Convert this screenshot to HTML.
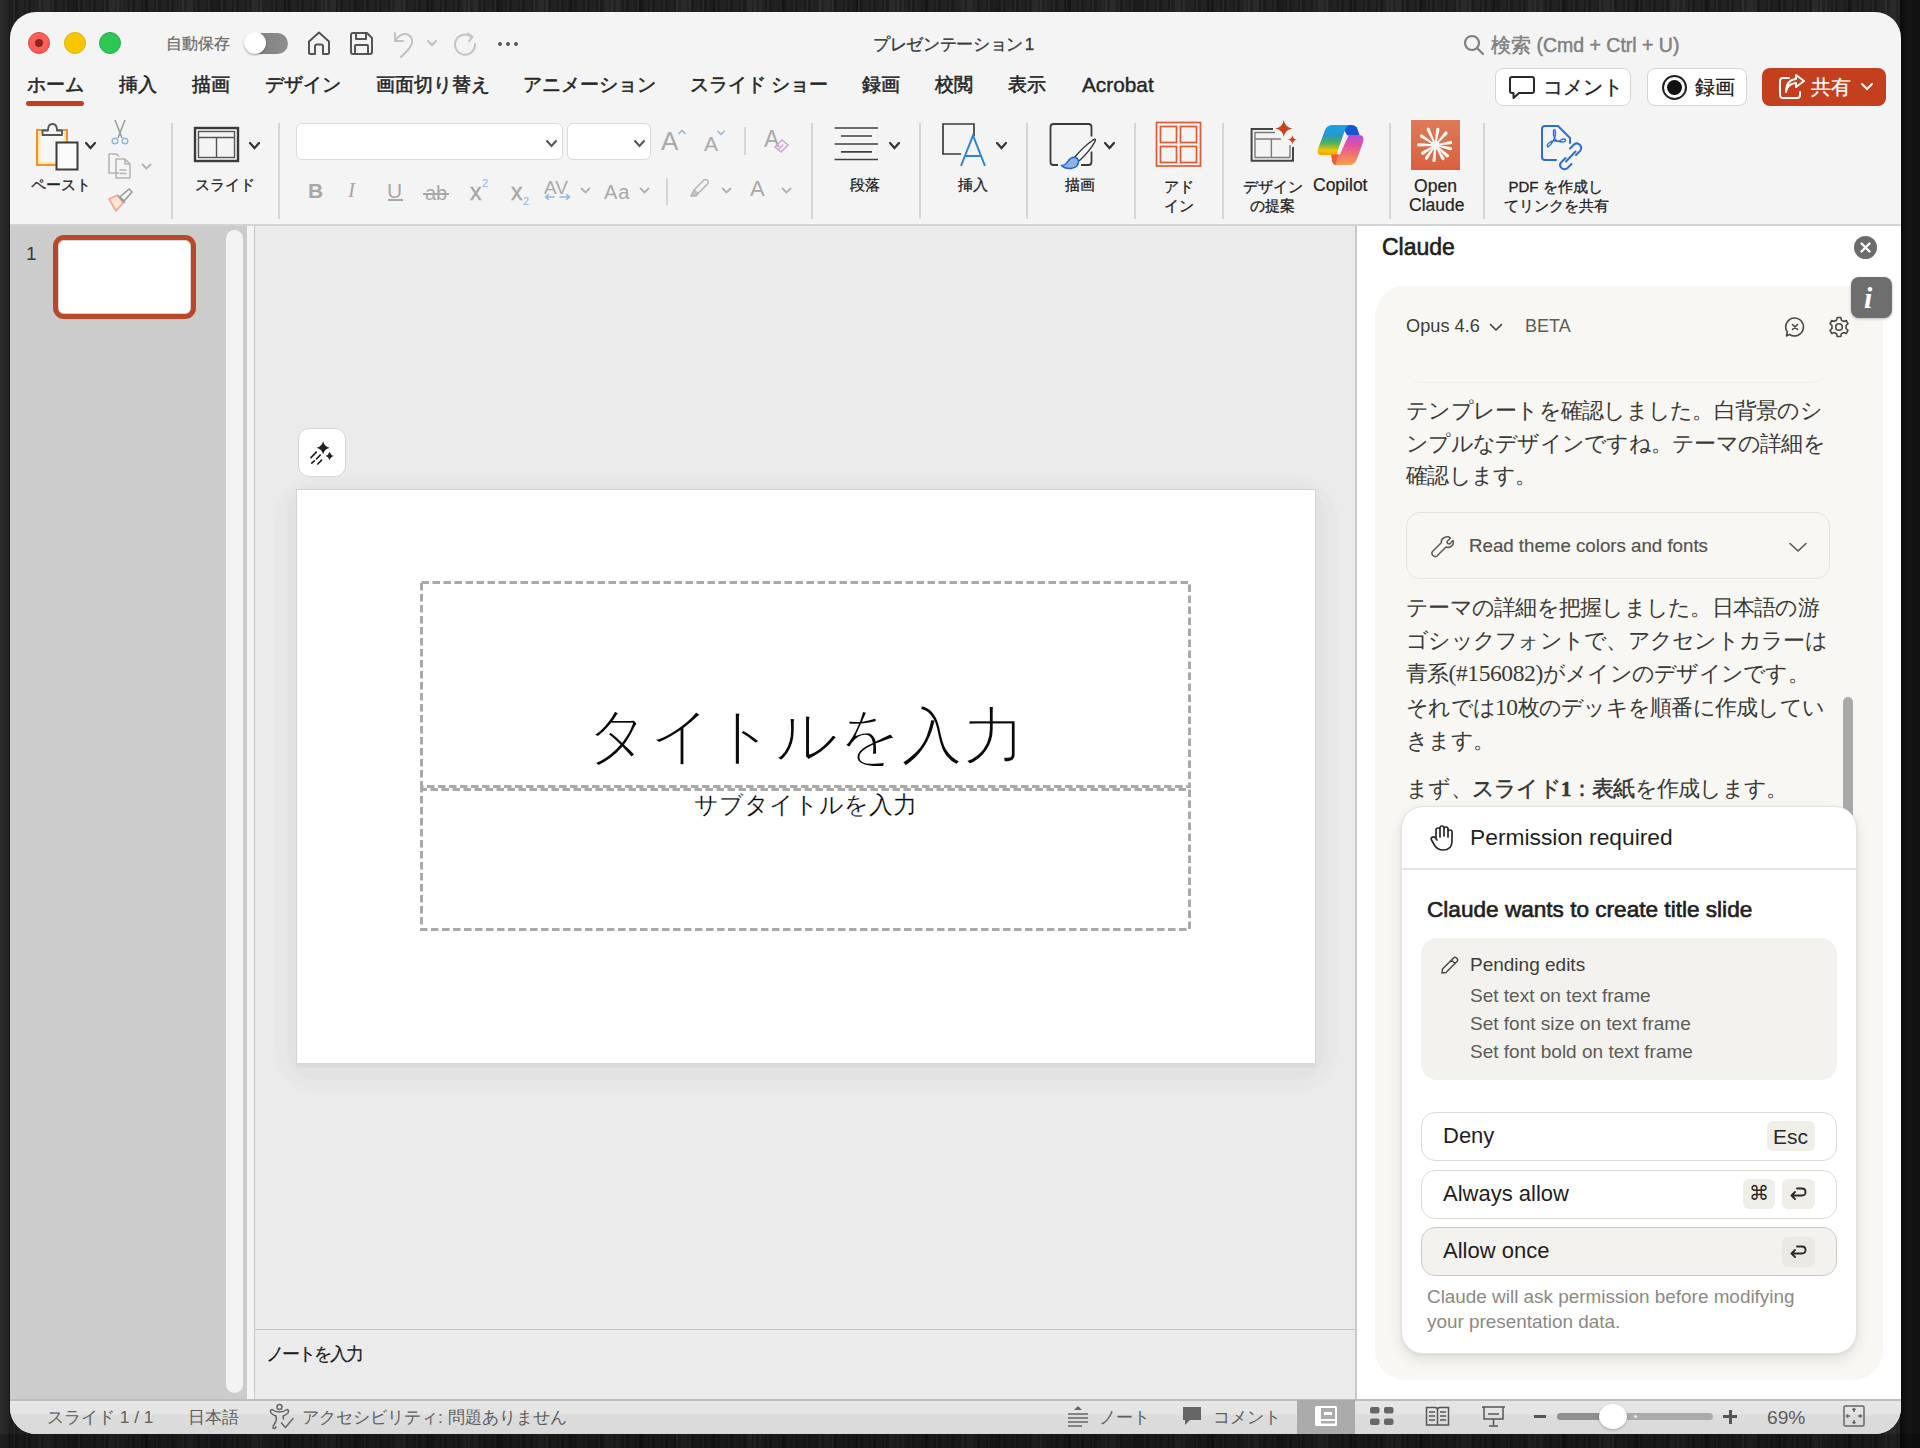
<!DOCTYPE html>
<html><head><meta charset="utf-8">
<style>
*{box-sizing:border-box;margin:0;padding:0}
html,body{width:1920px;height:1448px;overflow:hidden}
body{font-family:"Liberation Sans",sans-serif;position:relative;
background:#1e1e1e;
background-image:repeating-linear-gradient(90deg,rgba(255,255,255,0.035) 0 2px,rgba(0,0,0,0.1) 2px 5px,rgba(255,255,255,0.02) 5px 11px,rgba(0,0,0,0.07) 11px 13px),repeating-linear-gradient(90deg,rgba(0,0,0,0.22) 0 6px,rgba(0,0,0,0) 6px 37px,rgba(255,255,255,0.035) 37px 52px,rgba(0,0,0,0) 52px 71px);}
.abs{position:absolute}
#win{position:absolute;left:10px;top:12px;width:1891px;height:1422px;border-radius:26px;overflow:hidden;background:#f4f4f4}
.t{position:absolute;white-space:nowrap;line-height:1}
.tab{font-size:19px;color:#262626;-webkit-text-stroke:0.55px #262626}
.jp{font-size:21.6px;letter-spacing:-0.75px;line-height:32.7px;color:#3a3a37;white-space:nowrap}
.st{font-size:17.3px;color:#5e5e5e}
.sep{position:absolute;width:2px;background:#d6d6d6}
</style></head>
<body>
<div class="abs" style="left:0;top:0;width:10px;height:1448px;background:linear-gradient(90deg,#2c2c2c,#262626 80%,#161616)"></div>
<div class="abs" style="left:1900px;top:0;width:20px;height:1448px;background:linear-gradient(90deg,#0c0c0c,#141414 40%,#121212)"></div>
<div class="abs" style="left:0;top:1434px;width:1920px;height:14px;background:rgba(0,0,0,0.25)"></div>
<div id="win">
  <!-- content uses page coordinates via wrapper offset -->
  <div class="abs" style="left:-10px;top:-12px;width:1920px;height:1448px">
    <!-- ============ TITLE BAR ============ -->
    
    <!-- traffic lights -->
    <div class="abs" style="left:28px;top:32px;width:22px;height:22px;border-radius:50%;background:#fe5f57;border:0.5px solid #e14640"></div>
    <div class="abs" style="left:35px;top:39px;width:8px;height:8px;border-radius:50%;background:#8d2622"></div>
    <div class="abs" style="left:64px;top:32px;width:22px;height:22px;border-radius:50%;background:#f7c600;border:0.5px solid #e0b000"></div>
    <div class="abs" style="left:99px;top:32px;width:22px;height:22px;border-radius:50%;background:#2fc655;border:0.5px solid #22b245"></div>
    <div class="t" style="left:166px;top:36px;font-size:16px;color:#6e6e6e;-webkit-text-stroke:0.3px #6e6e6e">自動保存</div>
    <!-- toggle -->
    <div class="abs" style="left:245px;top:33px;width:43px;height:21px;border-radius:11px;background:linear-gradient(90deg,#7a7a7a,#8e8e8e)"></div>
    <div class="abs" style="left:244px;top:32px;width:22px;height:22px;border-radius:50%;background:#fff;box-shadow:0 1px 2px rgba(0,0,0,.35)"></div>
    <svg class="abs" style="left:306px;top:30px" width="26" height="26" viewBox="0 0 26 26" fill="none" stroke="#555" stroke-width="2" stroke-linejoin="round"><path d="M3 11.5 L13 2.5 L23 11.5 V22.5 Q23 24 21.5 24 H17 V16.5 Q17 14.5 15 14.5 H11 Q9 14.5 9 16.5 V24 H4.5 Q3 24 3 22.5 Z"/></svg>
    <svg class="abs" style="left:349px;top:31px" width="25" height="25" viewBox="0 0 25 25" fill="none" stroke="#555" stroke-width="2" stroke-linejoin="round"><path d="M2 4 Q2 2 4 2 H18 L23 7 V21 Q23 23 21 23 H4 Q2 23 2 21 Z"/><path d="M7 2 V8 H17 V2"/><path d="M6 23 V15 Q6 14 7 14 H18 Q19 14 19 15 V23"/></svg>
    <svg class="abs" style="left:391px;top:30px" width="26" height="28" viewBox="0 0 26 28" fill="none" stroke="#c2c2c2" stroke-width="2" stroke-linecap="round" stroke-linejoin="round"><path d="M4 3 V11 H12"/><path d="M4 11 Q9 3 15 4 Q22 6 21 13 Q20 18 10 27"/></svg>
    <svg class="abs" style="left:426px;top:39px" width="12" height="9" viewBox="0 0 12 9" fill="none" stroke="#bdbdbd" stroke-width="2" stroke-linecap="round"><path d="M2 2 L6 6 L10 2"/></svg>
    <svg class="abs" style="left:452px;top:31px" width="26" height="26" viewBox="0 0 26 26" fill="none" stroke="#c4c4c4" stroke-width="2" stroke-linecap="round" stroke-linejoin="round"><path d="M19.5 6 A10 10 0 1 0 23 13"/><path d="M16 2.5 L20.5 6 L17 10"/></svg>
    <div class="abs" style="left:498px;top:41.5px;width:4.4px;height:4.4px;border-radius:50%;background:#555"></div>
    <div class="abs" style="left:505.8px;top:41.5px;width:4.4px;height:4.4px;border-radius:50%;background:#555"></div>
    <div class="abs" style="left:513.6px;top:41.5px;width:4.4px;height:4.4px;border-radius:50%;background:#555"></div>
    <div class="t" style="left:873px;top:36px;font-size:17.2px;letter-spacing:-0.35px;color:#3a3a3a;-webkit-text-stroke:0.35px #3a3a3a">プレゼンテーション<span style="font-size:17px;margin-left:2px">1</span></div>
    <!-- search -->
    <svg class="abs" style="left:1463px;top:34px" width="22" height="22" viewBox="0 0 22 22" fill="none" stroke="#808080" stroke-width="2.2" stroke-linecap="round"><circle cx="9" cy="9" r="7"/><path d="M14 14 L20 20"/></svg>
    <div class="t" style="left:1491px;top:36px;font-size:19.5px;color:#808080;-webkit-text-stroke:0.45px #808080">検索 (Cmd + Ctrl + U)</div>
    <!-- tabs -->
    <div class="t tab" style="left:27px;top:75px">ホーム</div>
    <div class="abs" style="left:26px;top:101px;width:58px;height:5px;border-radius:3px;background:#c2401f"></div>
    <div class="t tab" style="left:119px;top:75px">挿入</div>
    <div class="t tab" style="left:192px;top:75px">描画</div>
    <div class="t tab" style="left:265px;top:75px">デザイン</div>
    <div class="t tab" style="left:376px;top:75px">画面切り替え</div>
    <div class="t tab" style="left:523px;top:75px">アニメーション</div>
    <div class="t tab" style="left:690px;top:75px">スライド ショー</div>
    <div class="t tab" style="left:862px;top:75px">録画</div>
    <div class="t tab" style="left:935px;top:75px">校閲</div>
    <div class="t tab" style="left:1008px;top:75px">表示</div>
    <div class="t tab" style="left:1082px;top:75px;font-size:20.8px;-webkit-text-stroke:0.4px #262626">Acrobat</div>
    <!-- right buttons -->
    <div class="abs" style="left:1495px;top:68px;width:136px;height:38px;border-radius:8px;background:#fff;border:1px solid #d5d5d5"></div>
    <svg class="abs" style="left:1508px;top:75px" width="28" height="26" viewBox="0 0 28 26" fill="none" stroke="#2a2a2a" stroke-width="2" stroke-linejoin="round"><path d="M4 2 H24 Q26 2 26 4 V16 Q26 18 24 18 H11 L5.5 23 V18 H4 Q2 18 2 16 V4 Q2 2 4 2 Z"/></svg>
    <div class="t" style="left:1543px;top:77px;font-size:20px;color:#222;-webkit-text-stroke:0.3px #222">コメント</div>
    <div class="abs" style="left:1647px;top:68px;width:100px;height:38px;border-radius:8px;background:#fff;border:1px solid #d5d5d5"></div>
    <div class="abs" style="left:1662px;top:75px;width:25px;height:25px;border-radius:50%;border:2px solid #222"></div>
    <div class="abs" style="left:1667px;top:80px;width:15px;height:15px;border-radius:50%;background:#111"></div>
    <div class="t" style="left:1695px;top:77px;font-size:20px;color:#222;-webkit-text-stroke:0.3px #222">録画</div>
    <div class="abs" style="left:1762px;top:68px;width:124px;height:38px;border-radius:8px;background:#c43f1d"></div>
    <svg class="abs" style="left:1777px;top:73px" width="30" height="28" viewBox="0 0 30 28" fill="none" stroke="#fff" stroke-width="2" stroke-linejoin="round" stroke-linecap="round"><path d="M12 5 H6 Q3 5 3 8 V22 Q3 25 6 25 H20 Q23 25 23 22 V19"/><path d="M9 19 Q10 11 19 10 V14 L27 8 L19 2 V6 Q9 7 9 19 Z"/></svg>
    <div class="t" style="left:1811px;top:77px;font-size:20px;color:#fff;-webkit-text-stroke:0.3px #fff">共有</div>
    <svg class="abs" style="left:1860px;top:82px" width="14" height="10" viewBox="0 0 14 10" fill="none" stroke="#fff" stroke-width="2" stroke-linecap="round"><path d="M2 2 L7 7 L12 2"/></svg>

    <!-- ============ RIBBON ============ -->
    
    <!-- separators -->
    <div class="sep" style="left:171px;top:123px;height:96px"></div>
    <div class="sep" style="left:278px;top:123px;height:96px"></div>
    <div class="sep" style="left:811px;top:123px;height:96px"></div>
    <div class="sep" style="left:919px;top:123px;height:96px"></div>
    <div class="sep" style="left:1026px;top:123px;height:96px"></div>
    <div class="sep" style="left:1134px;top:123px;height:96px"></div>
    <div class="sep" style="left:1222px;top:123px;height:96px"></div>
    <div class="sep" style="left:1389px;top:123px;height:96px"></div>
    <div class="sep" style="left:1483px;top:123px;height:96px"></div>
    <!-- paste -->
    <svg class="abs" style="left:34px;top:121px" width="50" height="52" viewBox="0 0 50 52">
      <rect x="3" y="9" width="30" height="35" fill="#fbe7a8" stroke="#f0902f" stroke-width="2"/>
      <rect x="6.5" y="12" width="23" height="29" fill="#f6f6f6" stroke="none"/>
      <path d="M8.5 14 V9.5 H14 Q14 3 18.5 3 Q23 3 23 9.5 H28 V14 Z" fill="#f4f4f4" stroke="#555" stroke-width="1.8" stroke-linejoin="round"/>
      <rect x="22.5" y="21.5" width="21" height="27" fill="#fafafa" stroke="#3c3c3c" stroke-width="2"/>
    </svg>
    <svg class="abs" style="left:84px;top:141px" width="13" height="10" viewBox="0 0 13 10" fill="none" stroke="#333" stroke-width="2.2" stroke-linecap="round"><path d="M2 2 L6.5 7 L11 2"/></svg>
    <div class="t" style="left:31px;top:177px;font-size:15px;color:#222;-webkit-text-stroke:0.3px #222">ペースト</div>
    <svg class="abs" style="left:110px;top:119px" width="20" height="27" viewBox="0 0 20 27" fill="none" stroke-width="1.5">
      <path d="M5 1 L12 19 M15 1 L8 19" stroke="#9a9a9a"/>
      <circle cx="5" cy="22" r="2.8" stroke="#8fb8e6"/><circle cx="15" cy="22" r="2.8" stroke="#8fb8e6"/>
    </svg>
    <svg class="abs" style="left:106px;top:152px" width="28" height="28" viewBox="0 0 28 28" fill="none" stroke="#b4b4b4" stroke-width="1.6" stroke-linejoin="round">
      <path d="M13 21 H3 V2 H10.5 L13 4.5"/><path d="M10 7 H19 L24 12 V26 H10 Z"/><path d="M19 7 V12 H24"/><path d="M13.5 18 H20.5 M13.5 21.5 H20.5"/>
    </svg>
    <svg class="abs" style="left:141px;top:163px" width="11" height="8" viewBox="0 0 11 8" fill="none" stroke="#b0b0b0" stroke-width="1.8" stroke-linecap="round"><path d="M1.5 1.5 L5.5 5.5 L9.5 1.5"/></svg>
    <svg class="abs" style="left:106px;top:187px" width="28" height="26" viewBox="0 0 28 26" fill="none" stroke-width="1.6" stroke-linejoin="round">
      <path d="M3 12 L12 8 L17 16 L10 24 Z" fill="#fbe3d6" stroke="#f0a88e"/>
      <path d="M14 10 L23 2 L26 5 L18 14 Z" stroke="#9a9a9a"/><path d="M12 9 L19 16" stroke="#9a9a9a"/>
    </svg>
    <!-- slide layout -->
    <svg class="abs" style="left:193px;top:126px" width="47" height="38" viewBox="0 0 47 38" fill="none" stroke="#3a3a3a">
      <rect x="2" y="2" width="43" height="33" stroke-width="2.4"/>
      <rect x="5.5" y="5.5" width="36" height="26" stroke-width="1.4" stroke="#555"/>
      <path d="M5.5 11.5 H41.5 M23.5 11.5 V31.5" stroke-width="1.4" stroke="#555"/>
    </svg>
    <svg class="abs" style="left:248px;top:141px" width="13" height="10" viewBox="0 0 13 10" fill="none" stroke="#333" stroke-width="2.2" stroke-linecap="round"><path d="M2 2 L6.5 7 L11 2"/></svg>
    <div class="t" style="left:195px;top:177px;font-size:15px;color:#222;-webkit-text-stroke:0.3px #222">スライド</div>
    <!-- font boxes -->
    <div class="abs" style="left:296px;top:123px;width:267px;height:37px;border-radius:6px;background:#fff;border:1px solid #dadada"></div>
    <svg class="abs" style="left:545px;top:138.5px" width="13" height="10" viewBox="0 0 13 10" fill="none" stroke="#555" stroke-width="2" stroke-linecap="round"><path d="M2 2 L6.5 7 L11 2"/></svg>
    <div class="abs" style="left:567px;top:123px;width:84px;height:37px;border-radius:6px;background:#fff;border:1px solid #dadada"></div>
    <svg class="abs" style="left:633px;top:138.5px" width="13" height="10" viewBox="0 0 13 10" fill="none" stroke="#555" stroke-width="2" stroke-linecap="round"><path d="M2 2 L6.5 7 L11 2"/></svg>
    <div class="t" style="left:661px;top:128px;font-size:26px;color:#a9a9a9">A</div>
    <svg class="abs" style="left:677px;top:128px" width="10" height="8" viewBox="0 0 10 8" fill="none" stroke="#8db6e3" stroke-width="1.5"><path d="M1.5 6 L5 2.5 L8.5 6"/></svg>
    <div class="t" style="left:704px;top:133px;font-size:21px;color:#a9a9a9">A</div>
    <svg class="abs" style="left:716px;top:129px" width="10" height="8" viewBox="0 0 10 8" fill="none" stroke="#8db6e3" stroke-width="1.5"><path d="M1.5 2 L5 5.5 L8.5 2"/></svg>
    <div class="sep" style="left:744px;top:127px;height:28px;width:1.5px"></div>
    <div class="t" style="left:764px;top:128px;font-size:23px;color:#a9a9a9">A</div>
    <svg class="abs" style="left:772px;top:138px" width="18" height="16" viewBox="0 0 18 16" fill="none" stroke="#d7a3dd" stroke-width="1.6"><path d="M3 9 L10 2 L16 7 L9 14 Z M6 12 L11 6.5"/></svg>
    <!-- row 2 -->
    <div class="t" style="left:308px;top:180px;font-size:21px;font-weight:bold;color:#a7a7a7">B</div>
    <div class="t" style="left:348px;top:180px;font-size:21px;font-style:italic;font-family:'Liberation Serif',serif;color:#a7a7a7">I</div>
    <div class="t" style="left:387px;top:180px;font-size:21px;color:#a7a7a7">U</div>
    <div class="abs" style="left:388px;top:199px;width:15px;height:1.6px;background:#a7a7a7"></div>
    <div class="t" style="left:425px;top:183px;font-size:20px;color:#a7a7a7">ab</div>
    <div class="abs" style="left:423px;top:193px;width:26px;height:1.6px;background:#a7a7a7"></div>
    <div class="t" style="left:470px;top:181px;font-size:23px;color:#a7a7a7;-webkit-text-stroke:0.4px #a7a7a7">x</div>
    <div class="t" style="left:482px;top:178px;font-size:11px;color:#8db6e3">2</div>
    <div class="t" style="left:511px;top:181px;font-size:23px;color:#a7a7a7;-webkit-text-stroke:0.4px #a7a7a7">x</div>
    <div class="t" style="left:523px;top:196px;font-size:11px;color:#8db6e3">2</div>
    <div class="t" style="left:544px;top:178px;font-size:19px;color:#a9a9a9">AV</div>
    <svg class="abs" style="left:544px;top:193px" width="27" height="8" viewBox="0 0 27 8" fill="none" stroke="#8db6e3" stroke-width="1.5" stroke-linecap="round"><path d="M1.5 4 H10 M1.5 4 L4.5 1.5 M1.5 4 L4.5 6.5 M16 4 H25.5 M25.5 4 L22.5 1.5 M25.5 4 L22.5 6.5"/></svg>
    <svg class="abs" style="left:580px;top:187px" width="11" height="8" viewBox="0 0 11 8" fill="none" stroke="#b0b0b0" stroke-width="1.8" stroke-linecap="round"><path d="M1.5 1.5 L5.5 5.5 L9.5 1.5"/></svg>
    <div class="t" style="left:604px;top:182px;font-size:20px;color:#a9a9a9;letter-spacing:1px">Aa</div>
    <svg class="abs" style="left:639px;top:187px" width="11" height="8" viewBox="0 0 11 8" fill="none" stroke="#b0b0b0" stroke-width="1.8" stroke-linecap="round"><path d="M1.5 1.5 L5.5 5.5 L9.5 1.5"/></svg>
    <div class="sep" style="left:666px;top:178px;height:27px;width:1.5px"></div>
    <svg class="abs" style="left:687px;top:178px" width="24" height="20" viewBox="0 0 24 20" fill="none" stroke="#b4b4b4" stroke-width="1.5" stroke-linejoin="round"><path d="M7 12 L17 2 Q19 1 20.5 2.5 Q22 4 21 5.5 L11 15.5 Z"/><path d="M7 12 L4 18 H9 L11 15.5" fill="#c4c4c4"/></svg>
    <svg class="abs" style="left:721px;top:187px" width="11" height="8" viewBox="0 0 11 8" fill="none" stroke="#b0b0b0" stroke-width="1.8" stroke-linecap="round"><path d="M1.5 1.5 L5.5 5.5 L9.5 1.5"/></svg>
    <div class="t" style="left:750px;top:178px;font-size:22px;color:#a9a9a9">A</div>
    <svg class="abs" style="left:781px;top:187px" width="11" height="8" viewBox="0 0 11 8" fill="none" stroke="#b0b0b0" stroke-width="1.8" stroke-linecap="round"><path d="M1.5 1.5 L5.5 5.5 L9.5 1.5"/></svg>
    <!-- paragraph -->
    <svg class="abs" style="left:833px;top:126px" width="47" height="36" viewBox="0 0 47 36" fill="none" stroke="#404040" stroke-width="1.7"><path d="M1.5 2 H45 M8 10 H39 M1.5 18 H45 M8 25.8 H39 M1.5 33.5 H45"/></svg>
    <svg class="abs" style="left:888px;top:141px" width="13" height="10" viewBox="0 0 13 10" fill="none" stroke="#333" stroke-width="2.2" stroke-linecap="round"><path d="M2 2 L6.5 7 L11 2"/></svg>
    <div class="t" style="left:850px;top:177px;font-size:15px;color:#222;-webkit-text-stroke:0.3px #222">段落</div>
    <!-- insert -->
    <svg class="abs" style="left:940px;top:121px" width="48" height="48" viewBox="0 0 48 48" fill="none">
      <path d="M21 33 H3 V3 H34 V15" stroke="#3a3a3a" stroke-width="1.7"/>
      <path d="M21 45 L33 14.5 L45 45 M25 35 H41" stroke="#2d83db" stroke-width="2"/>
    </svg>
    <svg class="abs" style="left:995px;top:141px" width="13" height="10" viewBox="0 0 13 10" fill="none" stroke="#333" stroke-width="2.2" stroke-linecap="round"><path d="M2 2 L6.5 7 L11 2"/></svg>
    <div class="t" style="left:958px;top:177px;font-size:15px;color:#222;-webkit-text-stroke:0.3px #222">挿入</div>
    <!-- draw -->
    <svg class="abs" style="left:1045px;top:118px" width="56" height="54" viewBox="1045 118 56 54" fill="none">
      <path d="M1058 165 H1053.5 Q1050.5 165 1050.5 162 V127 Q1050.5 124 1053.5 124 H1088.5 Q1091.5 124 1091.5 127 V136.5" stroke="#3a3a3a" stroke-width="1.8"/>
      <path d="M1081 165 H1088.5 Q1091.5 165 1091.5 162 V151.5" stroke="#3a3a3a" stroke-width="1.8"/>
      <path d="M1074.5 157.5 Q1083 147 1093 140 Q1096.5 138 1095 141.5 Q1090 151 1079 161" stroke="#3a3a3a" stroke-width="1.5" fill="#f6f6f6"/>
      <path d="M1061.5 165.5 Q1066 165 1068.5 160.5 Q1071 157 1074.5 157.2 Q1078.5 158 1078.5 162 Q1078 167.5 1071 168.5 Q1065 169 1061.5 165.5 Z" fill="#8db3e8" stroke="#1f63d6" stroke-width="1.5" stroke-linejoin="round"/>
    </svg>
    <svg class="abs" style="left:1103px;top:141px" width="13" height="10" viewBox="0 0 13 10" fill="none" stroke="#333" stroke-width="2.2" stroke-linecap="round"><path d="M2 2 L6.5 7 L11 2"/></svg>
    <div class="t" style="left:1065px;top:177px;font-size:15px;color:#222;-webkit-text-stroke:0.3px #222">描画</div>
    <!-- addin -->
    <svg class="abs" style="left:1155px;top:121px" width="48" height="48" viewBox="0 0 48 48" fill="none" stroke="#dd5b36" stroke-width="1.7">
      <rect x="1.5" y="1.5" width="44" height="43.5"/>
      <rect x="5.5" y="5.5" width="16" height="16"/><rect x="25.5" y="5.5" width="16" height="16"/>
      <rect x="5.5" y="25.5" width="16" height="16"/><rect x="25.5" y="25.5" width="16" height="16"/>
    </svg>
    <div class="t" style="left:1164px;top:177px;font-size:15px;color:#222;line-height:19px;white-space:pre;-webkit-text-stroke:0.3px #222">アド
イン</div>
    <!-- design ideas -->
    <svg class="abs" style="left:1248px;top:115px" width="52" height="50" viewBox="1248 115 52 50" fill="none">
      <path d="M1273 129 H1251.6 V160.7 H1293 V147" stroke="#444" stroke-width="2"/>
      <path d="M1275 132.5 H1255 V157.5 H1290 V145" stroke="#7a7a7a" stroke-width="1.4"/>
      <path d="M1255 139 H1281 M1271.4 139 V157.5" stroke="#7a7a7a" stroke-width="1.4"/>
      <path d="M1283.8 120 Q1285 127.3 1292.3 128.5 Q1285 129.7 1283.8 137 Q1282.6 129.7 1275.3 128.5 Q1282.6 127.3 1283.8 120 Z" fill="#c8431f"/>
      <path d="M1292.4 135.3 Q1293 139.2 1296.9 139.8 Q1293 140.4 1292.4 144.3 Q1291.8 140.4 1287.9 139.8 Q1291.8 139.2 1292.4 135.3 Z" fill="#c8431f"/>
    </svg>
    <div class="t" style="left:1243px;top:177px;font-size:15px;color:#222;line-height:19px;white-space:pre;text-align:center;width:59px;-webkit-text-stroke:0.3px #222">デザイン
の提案</div>
    <!-- copilot -->
    <svg class="abs" style="left:1317px;top:124px" width="48" height="42" viewBox="0 0 48 42">
      <defs>
        <linearGradient id="cpA" x1="0" y1="0" x2="0" y2="1"><stop offset="0" stop-color="#1aa3ec"/><stop offset="0.35" stop-color="#2b96c8"/><stop offset="0.6" stop-color="#4cb25a"/><stop offset="0.85" stop-color="#f6c400"/><stop offset="1" stop-color="#f2a300"/></linearGradient>
        <linearGradient id="cpB" x1="0" y1="0" x2="0" y2="1"><stop offset="0" stop-color="#b64fd9"/><stop offset="0.35" stop-color="#e2529f"/><stop offset="0.7" stop-color="#f27a6a"/><stop offset="1" stop-color="#f6a24e"/></linearGradient>
      </defs>
      <path d="M24 1 H34 Q39 1 40.5 5 L42.5 11 H30 Z" fill="#1656cf"/>
      <path d="M14 30 H26 L22 41 H19 Q16 41 15 37 Z" fill="#ee5a3a"/>
      <path d="M31 11 H42 Q48 11 46 18 L40 35 Q38 41 32 41 H21 Q18 41 19 38 L28 14 Q29 11 31 11 Z" fill="url(#cpB)"/>
      <path d="M16 1 H34 Q30 1 28 6 L20 29 Q18 31 15 31 H5 Q-1 31 1 25 L8 6 Q10 1 16 1 Z" fill="url(#cpA)"/>
      <path d="M29 11.5 H31.5 L23 30.5 H19.5 Z" fill="#f4f4f4" opacity="0.9"/>
    </svg>
    <div class="t" style="left:1313px;top:177px;font-size:17.5px;color:#222;-webkit-text-stroke:0.2px #222">Copilot</div>
    <!-- claude -->
    <div class="abs" style="left:1411px;top:120px;width:49px;height:50px;background:linear-gradient(#de7a59,#d9603f)"></div>
    <svg class="abs" style="left:1411px;top:120px" width="49" height="50" viewBox="0 0 49 50" fill="#fbf7f2"><path d="M24.10 22.59 L18.77 8.66 A1.7 1.7 0 0 0 15.67 10.07 L22.64 23.25 Z"/><path d="M25.56 22.85 L28.46 9.74 A1.7 1.7 0 0 0 25.09 9.23 L23.98 22.61 Z"/><path d="M26.65 23.84 L36.20 14.25 A1.7 1.7 0 0 0 33.63 12.01 L25.44 22.79 Z"/><path d="M27.00 25.56 L39.81 24.23 A1.7 1.7 0 0 0 39.23 20.88 L26.73 23.98 Z"/><path d="M26.67 26.52 L39.17 30.23 A1.7 1.7 0 0 0 39.91 26.91 L27.01 24.96 Z"/><path d="M25.74 27.46 L35.15 36.98 A1.7 1.7 0 0 0 37.40 34.43 L26.80 26.26 Z"/><path d="M24.95 27.77 L30.53 39.34 A1.7 1.7 0 0 0 33.48 37.65 L26.34 26.97 Z"/><path d="M23.38 27.62 L21.34 40.25 A1.7 1.7 0 0 0 24.73 40.56 L24.97 27.76 Z"/><path d="M22.31 26.79 L13.97 37.10 A1.7 1.7 0 0 0 16.75 39.05 L23.62 27.71 Z"/><path d="M21.86 25.85 L10.77 31.76 A1.7 1.7 0 0 0 12.57 34.64 L22.71 27.21 Z"/><path d="M21.92 24.33 L7.75 23.04 A1.7 1.7 0 0 0 7.65 26.44 L21.88 25.93 Z"/><path d="M22.75 23.16 L11.49 14.70 A1.7 1.7 0 0 0 9.62 17.54 L21.87 24.50 Z"/><circle cx="24.4" cy="25.2" r="4.5"/></svg>
    <div class="t" style="left:1409px;top:177px;font-size:17.5px;color:#222;line-height:19px;white-space:pre;text-align:center;width:53px;-webkit-text-stroke:0.2px #222">Open
Claude</div>
    <!-- pdf -->
    <svg class="abs" style="left:1539px;top:124px" width="44" height="48" viewBox="0 0 44 48" fill="none" stroke="#2c6fd8" stroke-width="2" stroke-linejoin="round" stroke-linecap="round">
      <path d="M17 36 H6 Q3 36 3 33 V5 Q3 2 6 2 H19 L31 14 V19"/>
      <path d="M9 23 Q7 21 10 19 Q14 16 17 17 L23 18 Q27 18 26.5 16 Q25 14 22 16 Q18 19 15.5 14 Q14 11 14.5 7 Q15 5 16 6 Q17 9 16 13 Q13 20 10 22 Q9 23 9 23 Z" stroke-width="1.4"/>
      <path d="M31 24.5 L35 20.5 Q38 18 41 21 Q43.5 24 41 27 L37 31 M26.5 34 L22.5 38 Q19.5 41 22.5 44 Q25.5 46.5 28.5 44 L32.5 40 M27 37.5 L36.5 27.5"/>
    </svg>
    <div class="t" style="left:1504px;top:177px;font-size:15px;color:#222;line-height:19px;white-space:pre;text-align:center;width:103px;-webkit-text-stroke:0.3px #222">PDF を作成し
てリンクを共有</div>

    <!-- ribbon bottom border -->
    <div class="abs" style="left:0;top:224px;width:1920px;height:2px;background:#d4d4d4"></div>
    <!-- ============ THUMB PANE ============ -->
    <div class="abs" style="left:0;top:226px;width:247px;height:1173px;background:#cccccc"></div>
    <div class="abs" style="left:247px;top:226px;width:7px;height:1173px;background:#f4f4f4"></div>
    <div class="abs" style="left:254px;top:226px;width:1px;height:1173px;background:#c6c6c6"></div>
    <div class="abs" style="left:226px;top:230px;width:17px;height:1163px;border-radius:9px;background:#f3f3f3"></div>
    <div class="t" style="left:26px;top:244px;font-size:19px;color:#3a3a3a">1</div>
    <div class="abs" style="left:53px;top:235px;width:143px;height:84px;border:5px solid #b9472a;border-radius:11px;background:#fff;box-shadow:inset 0 0 0 1px #d8d8d8"></div>
    <!-- ============ CANVAS ============ -->
    <div class="abs" style="left:255px;top:226px;width:1101px;height:1173px;background:#ebebeb"></div>
    <div class="abs" style="left:1355px;top:226px;width:2px;height:1173px;background:#c9c9c9"></div>
    <div class="abs" style="left:255px;top:1329px;width:1100px;height:1px;background:#c4c4c4"></div>
    <div class="t" style="left:266px;top:1345px;font-size:18px;letter-spacing:-2px;color:#1a1a1a;-webkit-text-stroke:0.2px #1a1a1a">ノートを入力</div>
    <!-- slide shadow -->
    <div class="abs" style="left:275px;top:477px;width:1062px;height:615px;border-radius:42px;background:#e7e7e7;filter:blur(1px)"></div>
    <div class="abs" style="left:287px;top:485px;width:1037px;height:595px;border-radius:28px;background:#e2e2e2;filter:blur(1px)"></div>
    <div class="abs" style="left:296px;top:1063px;width:1020px;height:5px;background:linear-gradient(#d7d7d5,#dedede)"></div>
    <div class="abs" style="left:296px;top:489px;width:1020px;height:574px;background:#fff;border:1px solid #d3d3d3;border-bottom:none"></div>
    <!-- magic button -->
    <div class="abs" style="left:298px;top:428px;width:48px;height:49px;border-radius:11px;background:#fff;border:1px solid #d6d6d6"></div>
    <svg class="abs" style="left:298px;top:428px" width="48" height="49" viewBox="298 428 48 49"><path d="M323.1 441.2 Q324.40000000000003 446.5 329.70000000000005 447.8 Q324.40000000000003 449.1 323.1 454.40000000000003 Q321.8 449.1 316.5 447.8 Q321.8 446.5 323.1 441.2 Z" fill="#222"/><path d="M329.6 451.7 Q330.5 455.1 333.90000000000003 456 Q330.5 456.9 329.6 460.3 Q328.70000000000005 456.9 325.3 456 Q328.70000000000005 455.1 329.6 451.7 Z" fill="#222"/><path d="M311 457.6 L316.3 452.2 M316.5 459 L320.2 455.2 M311.8 463.2 L314.3 460.8 M317.8 464 L321.6 460.2" stroke="#222" stroke-width="1.7" stroke-linecap="round"/></svg>
    <!-- placeholders -->
    <svg class="abs" style="left:400px;top:560px" width="820" height="400" viewBox="400 560 820 400" fill="none" stroke="#a9a9a9" stroke-width="3" stroke-dasharray="7.5 3.5">
      <rect x="421.5" y="582.5" width="768" height="204"/>
      <rect x="421.5" y="789.5" width="768" height="140" stroke-dashoffset="2"/>
    </svg>
    
    <div class="t" style="left:420px;top:705px;width:771px;text-align:center;font-size:62px;color:#0a0a0a;-webkit-text-stroke:1.8px #fff">タイトルを入力</div>
    <div class="t" style="left:420px;top:793px;width:771px;text-align:center;font-size:24px;color:#000;-webkit-text-stroke:0.25px #fff">サブタイトルを入力</div>
    <!-- ============ CLAUDE PANEL ============ -->
    
    <div class="abs" style="left:1357px;top:226px;width:563px;height:1173px;background:#fff"></div>
    <div class="t" style="left:1382px;top:236px;font-size:23px;color:#1f1f1f;-webkit-text-stroke:0.6px #1f1f1f">Claude</div>
    <div class="abs" style="left:1854px;top:236px;width:23px;height:23px;border-radius:50%;background:#6b6b6b"></div>
    <svg class="abs" style="left:1854px;top:236px" width="23" height="23" viewBox="0 0 23 23" stroke="#fff" stroke-width="2.4" stroke-linecap="round"><path d="M7.5 7.5 L15.5 15.5 M15.5 7.5 L7.5 15.5"/></svg>
    <!-- card -->
    <div class="abs" style="left:1375px;top:286px;width:508px;height:1094px;border-radius:30px;background:#f8f7f4"></div>
    <div class="abs" style="left:1851px;top:277px;width:41px;height:41px;border-radius:8px;background:#6e6e6e;box-shadow:0 1px 3px rgba(0,0,0,.25)"></div>
    <div class="t" style="left:1864px;top:283px;font-size:30px;font-style:italic;font-weight:bold;font-family:'Liberation Serif',serif;color:#fff">i</div>
    <div class="t" style="left:1406px;top:317px;font-size:18.2px;color:#3d3d3a">Opus 4.6</div>
    <svg class="abs" style="left:1488px;top:321px" width="16" height="12" viewBox="0 0 16 12" fill="none" stroke="#3d3d3a" stroke-width="1.6" stroke-linecap="round" stroke-linejoin="round"><path d="M2.5 3.5 L8 9 L13.5 3.5"/></svg>
    <div class="t" style="left:1525px;top:317px;font-size:18px;color:#5e5d59">BETA</div>
    <svg class="abs" style="left:1784px;top:316px" width="22" height="22" viewBox="0 0 22 22" fill="none" stroke="#4a4945" stroke-width="1.6" stroke-linecap="round" stroke-linejoin="round"><path d="M11 2 A9 9 0 1 1 5.5 18.5 L2.5 20 L3.3 16 A9 9 0 0 1 11 2 Z"/><path d="M8.5 8.5 L13.5 13.5 M13.5 8.5 L8.5 13.5"/></svg>
    <svg class="abs" style="left:1827px;top:315px" width="24" height="24" viewBox="0 0 24 24" fill="none" stroke="#4a4945" stroke-width="1.6" stroke-linejoin="round"><circle cx="12" cy="12" r="3.3"/><path d="M10.2 2.5 H13.8 L14.4 5.2 Q15.6 5.7 16.6 6.4 L19.2 5.5 L21 8.6 L19 10.5 Q19.2 12 19 13.5 L21 15.4 L19.2 18.5 L16.6 17.6 Q15.6 18.3 14.4 18.8 L13.8 21.5 H10.2 L9.6 18.8 Q8.4 18.3 7.4 17.6 L4.8 18.5 L3 15.4 L5 13.5 Q4.8 12 5 10.5 L3 8.6 L4.8 5.5 L7.4 6.4 Q8.4 5.7 9.6 5.2 Z"/></svg>
    <div class="abs" style="left:1406px;top:330px;width:422px;height:53px;border-radius:0 0 16px 16px;border-bottom:1px solid #efeee9"></div>
    <div class="abs jp" style="left:1406px;top:395px;width:430px">テンプレートを確認しました。白背景のシ<br>ンプルなデザインですね。テーマの詳細を<br>確認します。</div>
    <!-- tool box -->
    <div class="abs" style="left:1406px;top:512px;width:424px;height:67px;border-radius:14px;border:1px solid #e6e4de"></div>
    <svg class="abs" style="left:1430px;top:534px" width="24" height="24" viewBox="0 0 24 24" fill="none" stroke="#5a5955" stroke-width="1.5" stroke-linejoin="round" stroke-linecap="round"><path d="M14.5 3.5 Q18 2 20.5 4 L17 7.5 L17.5 9.5 L19.5 10 L23 6.5 Q24.5 10 21 12.5 Q18.5 14 16 13 L7 22 Q5 23.5 3 21.5 Q1 19.5 2.5 17.5 L11.5 8.5 Q10.5 5.5 14.5 3.5 Z"/></svg>
    <div class="t" style="left:1469px;top:537px;font-size:18.7px;color:#55544f;-webkit-text-stroke:0.2px #55544f">Read theme colors and fonts</div>
    <svg class="abs" style="left:1787px;top:540px" width="22" height="14" viewBox="0 0 22 14" fill="none" stroke="#5a5955" stroke-width="1.6" stroke-linecap="round" stroke-linejoin="round"><path d="M3 3.5 L11 11 L19 3.5"/></svg>
    <div class="abs jp" style="left:1406px;top:592px;width:430px">テーマの詳細を把握しました。日本語の游<br>ゴシックフォントで、アクセントカラーは<br>青系<span style="font-family:'Liberation Serif',serif;font-size:23.5px;letter-spacing:-0.4px">(#156082)</span>がメインのデザインです。<br>それでは<span style="font-family:'Liberation Serif',serif;font-size:23.5px;letter-spacing:-0.4px">10</span>枚のデッキを順番に作成してい<br>きます。</div>
    <div class="abs jp" style="left:1406px;top:773px;width:430px">まず、<b style="-webkit-text-stroke:0.4px #1f1f1e;font-weight:normal">スライド<span style="font-family:'Liberation Serif',serif;font-weight:bold">1</span>：表紙</b>を作成します。</div>
    <!-- scrollbar -->
    <div class="abs" style="left:1843px;top:697px;width:10px;height:130px;border-radius:5px;background:#a9a9a9"></div>
    <!-- permission card -->
    <div class="abs" style="left:1401px;top:806px;width:456px;height:548px;border-radius:22px;background:#fff;border:1px solid #e3e2de;box-shadow:0 6px 14px rgba(0,0,0,0.10),0 1px 3px rgba(0,0,0,0.06)"></div>
    <svg class="abs" style="left:1429px;top:824px" width="26" height="28" viewBox="0 0 26 28" fill="none" stroke="#2a2a28" stroke-width="1.7" stroke-linecap="round" stroke-linejoin="round"><path d="M7 14 V6 Q7 4 9 4 Q11 4 11 6 V13 M11 12 V4 Q11 2 13 2 Q15 2 15 4 V12 M15 12 V5 Q15 3 17 3 Q19 3 19 5 V13 M19 11 V8 Q19 6 21 6 Q23 6 23 8 V17 Q23 26 14 26 Q9 26 6 22 L2.5 16 Q1.5 14 3.5 13 Q5 12.5 6.5 14 L8 16"/></svg>
    <div class="t" style="left:1470px;top:826px;font-size:22.8px;color:#1f1f1e">Permission required</div>
    <div class="abs" style="left:1402px;top:868px;width:454px;height:1.5px;background:#e6e5e1"></div>
    <div class="t" style="left:1427px;top:898.5px;font-size:22.6px;color:#1f1f1e;-webkit-text-stroke:0.65px #1f1f1e">Claude wants to create title slide</div>
    <div class="abs" style="left:1421px;top:938px;width:416px;height:142px;border-radius:16px;background:#f3f2ee"></div>
    <svg class="abs" style="left:1440px;top:955px" width="20" height="20" viewBox="0 0 20 20" fill="none" stroke="#4a4945" stroke-width="1.5" stroke-linejoin="round"><path d="M2 18 L2.5 14 L13.5 3 Q15 1.5 16.5 3 L17 3.5 Q18.5 5 17 6.5 L6 17.5 Z M11.5 5 L15 8.5"/></svg>
    <div class="t" style="left:1470px;top:955px;font-size:19px;color:#3d3d3a">Pending edits</div>
    <div class="t" style="left:1470px;top:982px;font-size:19px;color:#5d5c58;line-height:28px;white-space:pre">Set text on text frame
Set font size on text frame
Set font bold on text frame</div>
    <!-- buttons -->
    <div class="abs" style="left:1421px;top:1112px;width:416px;height:49px;border-radius:14px;background:#fff;border:1px solid #dcdbd6"></div>
    <div class="t" style="left:1443px;top:1125px;font-size:22px;color:#1f1e1d">Deny</div>
    <div class="abs" style="left:1767px;top:1121px;width:48px;height:30px;border-radius:6px;background:#f0eee8"></div>
    <div class="t" style="left:1773px;top:1126px;font-size:21px;color:#2a2a28">Esc</div>
    <div class="abs" style="left:1421px;top:1170px;width:416px;height:49px;border-radius:14px;background:#fff;border:1px solid #dcdbd6"></div>
    <div class="t" style="left:1443px;top:1183px;font-size:22px;color:#1f1e1d">Always allow</div>
    <div class="abs" style="left:1743px;top:1179px;width:32px;height:30px;border-radius:6px;background:#f0eee8"></div>
    <div class="t" style="left:1749px;top:1183px;font-size:20px;color:#2a2a28">⌘</div>
    <div class="abs" style="left:1782px;top:1179px;width:33px;height:30px;border-radius:6px;background:#f0eee8"></div>
    <svg class="abs" style="left:1788px;top:1184px" width="21" height="20" viewBox="0 0 21 20" fill="none" stroke="#2a2a28" stroke-width="1.8" stroke-linecap="round" stroke-linejoin="round"><path d="M9 4.5 H14 Q17.5 4.5 17.5 8 Q17.5 11.5 14 11.5 H3.5 M7 8 L3.5 11.5 L7 15"/></svg>
    <div class="abs" style="left:1421px;top:1227px;width:416px;height:49px;border-radius:14px;background:#f3f2ee;border:1px solid #cbcac4"></div>
    <div class="t" style="left:1443px;top:1240px;font-size:22px;color:#1f1e1d">Allow once</div>
    <div class="abs" style="left:1782px;top:1237px;width:33px;height:30px;border-radius:6px;background:#ebe9e3"></div>
    <svg class="abs" style="left:1788px;top:1242px" width="21" height="20" viewBox="0 0 21 20" fill="none" stroke="#2a2a28" stroke-width="1.8" stroke-linecap="round" stroke-linejoin="round"><path d="M9 4.5 H14 Q17.5 4.5 17.5 8 Q17.5 11.5 14 11.5 H3.5 M7 8 L3.5 11.5 L7 15"/></svg>
    <div class="t" style="left:1427px;top:1284px;font-size:18.9px;color:#8a8985;line-height:25px;white-space:pre">Claude will ask permission before modifying
your presentation data.</div>

    <!-- ============ STATUS BAR ============ -->
    <div class="abs" style="left:0;top:1399px;width:1920px;height:35px;background:linear-gradient(#e6e6e6 0,#e4e4e4 13px,#dcdcdc 14px,#dadada 100%);border-top:2px solid #bdbdbd"></div>
    <div class="t st" style="left:47px;top:1408.5px">スライド 1 / 1</div>
    <div class="t st" style="left:188px;top:1408.5px">日本語</div>
    <svg class="abs" style="left:268px;top:1403px" width="27" height="28" viewBox="0 0 27 28" fill="none" stroke="#666" stroke-width="1.5" stroke-linecap="round" stroke-linejoin="round"><circle cx="11.5" cy="4" r="2.5"/><path d="M3 10 Q1.5 7 4 6.5 Q7 9 11.5 9 Q16 9 19 6.5 Q21.5 7 20 10 Q17 12.5 15 13 L15.5 16 M8 13 Q6 12.5 3 10 M8 13 Q9 17 7 20 Q4.5 24 5 25 Q6.5 26.5 8 24"/><path d="M13.5 20 L17.5 24.5 L25 15.5"/></svg>
    <div class="t st" style="left:302px;top:1408.5px">アクセシビリティ: 問題ありません</div>
    <svg class="abs" style="left:1066px;top:1405px" width="24" height="22" viewBox="0 0 24 22" fill="none" stroke="#666" stroke-width="1.6"><path d="M12 1 L8 5 H16 Z" fill="#666" stroke="none"/><path d="M2 9 H22 M2 13 H22 M2 17 H22 M2 21 H16"/></svg>
    <div class="t st" style="left:1099px;top:1408.5px">ノート</div>
    <svg class="abs" style="left:1181px;top:1405px" width="22" height="22" viewBox="0 0 22 22"><path d="M2 2 H20 V15 H9 L4 20 V15 H2 Z" fill="#666"/></svg>
    <div class="t st" style="left:1213px;top:1408.5px">コメント</div>
    <div class="abs" style="left:1297px;top:1400px;width:58px;height:34px;background:#ababab"></div>
    <svg class="abs" style="left:1314px;top:1405px" width="24" height="22" viewBox="0 0 24 22"><rect x="1" y="1" width="22" height="20" rx="1.5" fill="#fff"/><rect x="7" y="3" width="14" height="11" fill="#ababab"/><rect x="10" y="7" width="8" height="3" fill="#fff"/><rect x="7" y="16" width="14" height="2.5" fill="#ababab"/></svg>
    <svg class="abs" style="left:1370px;top:1407px" width="25" height="19" viewBox="0 0 25 19" fill="#666"><rect x="0" y="0" width="9.5" height="6.5" rx="2"/><rect x="14" y="0" width="9.5" height="6.5" rx="2"/><rect x="0" y="11.5" width="9.5" height="6.5" rx="2"/><rect x="14" y="11.5" width="9.5" height="6.5" rx="2"/></svg>
    <svg class="abs" style="left:1425px;top:1405px" width="25" height="22" viewBox="0 0 25 22" fill="none" stroke="#555" stroke-width="1.5"><path d="M1.5 2.5 H10 Q12.5 2.5 12.5 5 V20 H1.5 Z M23.5 2.5 H15 Q12.5 2.5 12.5 5 V20 H23.5 Z M4 7 H10 M4 11 H10 M4 15 H10 M15 7 H21 M15 11 H21 M15 15 H21"/></svg>
    <svg class="abs" style="left:1481px;top:1405px" width="25" height="23" viewBox="0 0 25 23" fill="none" stroke="#555" stroke-width="1.5"><path d="M1 2 H24 M3 2 V14 H22 V2 M12.5 14 V20 M8 21 H17 M7 9 H18"/></svg>
    <div class="abs" style="left:1534px;top:1415px;width:12px;height:3px;background:#555"></div>
    <div class="abs" style="left:1557px;top:1413px;width:156px;height:7px;border-radius:4px;background:linear-gradient(90deg,#8f8f8f 0 55px,#ababab 55px)"></div>
    <div class="abs" style="left:1634px;top:1415px;width:3px;height:3px;border-radius:50%;background:#eee"></div>
    <div class="abs" style="left:1599px;top:1404px;width:28px;height:25px;border-radius:50%;background:#fff;box-shadow:0 1px 3px rgba(0,0,0,.25)"></div>
    <div class="abs" style="left:1723px;top:1415px;width:14px;height:3px;background:#555"></div>
    <div class="abs" style="left:1728.5px;top:1409.5px;width:3px;height:14px;background:#555"></div>
    <div class="t st" style="left:1767px;top:1407.5px;font-size:19.2px">69%</div>
    <svg class="abs" style="left:1843px;top:1405px" width="22" height="22" viewBox="0 0 22 22" fill="none" stroke="#666" stroke-width="1.5"><rect x="1" y="1" width="20" height="20" rx="1.5"/><path d="M11 3.5 V7 M9.5 5 L11 3.5 L12.5 5 M11 18.5 V15 M9.5 17 L11 18.5 L12.5 17 M3.5 11 H7 M5 9.5 L3.5 11 L5 12.5 M18.5 11 H15 M17 9.5 L18.5 11 L17 12.5"/></svg>

  </div>
</div>
</body></html>
